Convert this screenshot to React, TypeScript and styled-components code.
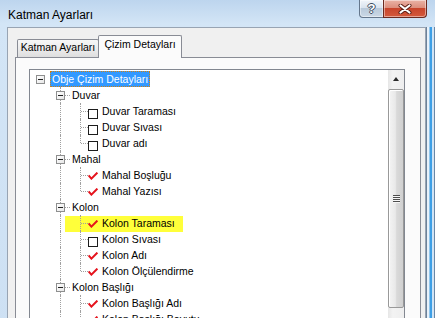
import React from 'react'
import styled, { createGlobalStyle } from 'styled-components'

const GlobalStyle = createGlobalStyle`
  html, body {
    margin: 0;
    padding: 0;
    overflow: hidden;
    background: #d2e4f6;
  }

  body {
    font-family: "Liberation Sans", Arial, sans-serif;
  }
`

const Window = styled.div`
  width: 435px;
  height: 340px;
  display: flex;
  flex-direction: column;
  background: linear-gradient(to bottom, #bdd5ee 0, #d3e5f6 24px, #cde0f3 100%);
`

const TitleBar = styled.div`
  height: 27px;
  display: flex;
  align-items: flex-start;
  padding: 0 8px 0 8px;
  flex-shrink: 0;
`

const Title = styled.div`
  flex: 1;
  padding-top: 9px;
  font-size: 12px;
  line-height: 12px;
  color: #000;
`

const CaptionButtons = styled.div`
  display: flex;
`

const CaptionButton = styled.div<{ $close?: boolean }>`
  box-sizing: border-box;
  width: ${(p) => (p.$close ? 44 : 25)}px;
  height: 18px;
  margin-left: ${(p) => (p.$close ? -1 : 0)}px;
  display: flex;
  align-items: center;
  justify-content: center;
  border: 1px solid ${(p) => (p.$close ? '#6b2a20' : '#64768c')};
  border-top: none;
  border-radius: ${(p) => (p.$close ? '0 0 4px 0' : '0 0 0 4px')};
  background: ${(p) =>
    p.$close
      ? 'linear-gradient(to bottom, #eab3a6 0, #dc8f7e 45%, #c8452c 50%, #d4593c 100%)'
      : 'linear-gradient(to bottom, #f1f5fa 0, #dae4ef 45%, #b9c9da 50%, #cbd8e6 100%)'};
  box-shadow: inset 0 0 0 1px rgba(255, 255, 255, 0.45);
  color: #fff;
  font-weight: bold;
  font-size: 13px;
  line-height: 13px;
  text-shadow:
    1px 0 0 #3c4c60,
    -1px 0 0 #3c4c60,
    0 1px 0 #3c4c60,
    0 -1px 0 #3c4c60;
`

const Frame = styled.div`
  flex: 1;
  display: flex;
  padding-left: 7px;
`

const RightEdge = styled.div`
  width: 9px;
  flex-shrink: 0;
  background: linear-gradient(
    to right,
    #6d8299 0 1px,
    #e8f1fa 1px 3px,
    #8fc6ee 3px 4px,
    #3d9fe6 4px 6px,
    #cfe4f6 6px 8px,
    #6a87a6 8px 9px
  );
`

const Client = styled.div`
  flex: 1;
  display: flex;
  flex-direction: column;
  border: 1px solid #98a4b3;
  border-bottom: none;
  background: #f0f0f0;
  padding: 7px 4px 0 7px;
`

const TabStrip = styled.div`
  display: flex;
  align-items: flex-end;
  padding-left: 2px;
  height: 22px;
  position: relative;
  z-index: 1;
`

const Tab = styled.div<{ $active?: boolean; $width: number }>`
  box-sizing: border-box;
  width: ${(p) => p.$width}px;
  height: ${(p) => (p.$active ? 23 : 18)}px;
  margin-left: ${(p) => (p.$active ? -1 : 0)}px;
  margin-bottom: ${(p) => (p.$active ? -1 : 0)}px;
  padding-top: ${(p) => (p.$active ? 2 : 1)}px;
  border: 1px solid #898c95;
  border-bottom: none;
  border-radius: 2px 2px 0 0;
  background: ${(p) =>
    p.$active ? '#fbfbfb' : 'linear-gradient(to bottom, #f7f7f7 0, #ececec 50%, #dedede 100%)'};
  font-size: 10.5px;
  line-height: 13px;
  text-align: center;
  color: #000;
  white-space: nowrap;
`

const Panel = styled.div`
  flex: 1;
  display: flex;
  flex-direction: column;
  border: 1px solid #898c95;
  border-bottom: none;
  background: #fbfbfb;
  padding: 11px 15px 0 13px;
`

const TreeBox = styled.div`
  flex: 1;
  display: flex;
  border: 1px solid #828790;
  border-bottom: none;
  background: #fff;
  overflow: hidden;
`

const TreeList = styled.div`
  flex: 1;
  padding-top: 1px;
  font-size: 10.5px;
  line-height: 16px;
  color: #000;
`

const Row = styled.div<{ $marked?: boolean }>`
  position: relative;
  z-index: 0;
  display: flex;
  height: 16px;

  &::before {
    content: '';
    display: ${(p) => (p.$marked ? 'block' : 'none')};
    position: absolute;
    z-index: -1;
    left: 35px;
    top: 1px;
    width: 118px;
    height: 16px;
    background: #ffff3a;
  }
`

const Indent = styled.div<{ $line?: boolean }>`
  position: relative;
  width: 20px;
  flex-shrink: 0;

  &::before {
    content: '';
    display: ${(p) => (p.$line ? 'block' : 'none')};
    position: absolute;
    left: 10px;
    top: 0;
    height: 16px;
    border-left: 1px dotted #a0a0a0;
  }
`

const NodeCell = styled.div`
  position: relative;
  width: 20px;
  flex-shrink: 0;
`

const VLine = styled.span<{ $full?: boolean }>`
  position: absolute;
  left: 10px;
  top: 0;
  height: ${(p) => (p.$full ? 16 : 8)}px;
  border-left: 1px dotted #a0a0a0;
`

const HLine = styled.span<{ $leaf?: boolean }>`
  position: absolute;
  left: 11px;
  top: 8px;
  width: ${(p) => (p.$leaf ? 7 : 9)}px;
  border-top: 1px dotted #a0a0a0;
`

const Expander = styled.span`
  position: absolute;
  left: 6px;
  top: 4px;
  box-sizing: border-box;
  width: 9px;
  height: 9px;
  border: 1px solid #8e8f8f;
  background: linear-gradient(to bottom right, #ffffff, #e6e6e6);

  &::after {
    content: '';
    position: absolute;
    left: 1px;
    top: 3px;
    width: 5px;
    height: 1px;
    background: #222;
  }
`

const State = styled.div<{ $on?: boolean }>`
  width: 14px;
  margin-left: -4px;
  flex-shrink: 0;
  box-sizing: border-box;
  padding: ${(p) => (p.$on ? '5px 0 0 2px' : '6px 0 0 2px')};
`

const CheckBox = styled.div`
  box-sizing: border-box;
  width: 10px;
  height: 10px;
  border: 1px solid #1c1c1c;
  background: #fff;
`

const Label = styled.span<{ $selected?: boolean }>`
  display: inline-block;
  height: 16px;
  padding: 0 2px;
  white-space: nowrap;
  box-sizing: border-box;
  background: ${(p) => (p.$selected ? '#3399ff' : 'transparent')};
  color: ${(p) => (p.$selected ? '#fff' : '#000')};
  outline: ${(p) => (p.$selected ? '1px dotted #d4800c' : 'none')};
  outline-offset: -1px;
`

const ScrollBar = styled.div`
  width: 16px;
  flex-shrink: 0;
  display: flex;
  flex-direction: column;
  background: linear-gradient(to right, #e6e6e6 0, #f3f3f3 30%, #eeeeee 100%);
`

const ArrowButton = styled.div`
  height: 17px;
  display: flex;
  align-items: center;
  justify-content: center;
`

const ArrowUp = styled.span`
  width: 0;
  height: 0;
  border-left: 3.5px solid transparent;
  border-right: 3.5px solid transparent;
  border-bottom: 4px solid #2a2a2a;
`

const Thumb = styled.div`
  box-sizing: border-box;
  height: 219px;
  margin-top: 2px;
  border: 1px solid #999;
  border-radius: 2px;
  display: flex;
  align-items: center;
  justify-content: center;
  background: linear-gradient(to right, #f4f4f4 0, #e9e9e9 45%, #d9d9d9 55%, #d0d0d0 100%);
  box-shadow: inset 1px 1px 0 #fff;
`

const Grip = styled.span`
  width: 7px;
  height: 8px;
  background: repeating-linear-gradient(to bottom, #4d4d4d 0 1px, #f6f6f6 1px 2px);
`

type Kind = 'branch' | 'on' | 'off'

type Item = {
  label: string
  level: number
  kind: Kind
  last?: boolean
  selected?: boolean
  marked?: boolean
}

const items: Item[] = [
  { label: 'Obje Çizim Detayları', level: 0, kind: 'branch', selected: true, last: true },
  { label: 'Duvar', level: 1, kind: 'branch' },
  { label: 'Duvar Taraması', level: 2, kind: 'off' },
  { label: 'Duvar Sıvası', level: 2, kind: 'off' },
  { label: 'Duvar adı', level: 2, kind: 'off', last: true },
  { label: 'Mahal', level: 1, kind: 'branch' },
  { label: 'Mahal Boşluğu', level: 2, kind: 'on' },
  { label: 'Mahal Yazısı', level: 2, kind: 'on', last: true },
  { label: 'Kolon', level: 1, kind: 'branch' },
  { label: 'Kolon Taraması', level: 2, kind: 'on', marked: true },
  { label: 'Kolon Sıvası', level: 2, kind: 'off' },
  { label: 'Kolon Adı', level: 2, kind: 'on' },
  { label: 'Kolon Ölçülendirme', level: 2, kind: 'on', last: true },
  { label: 'Kolon Başlığı', level: 1, kind: 'branch' },
  { label: 'Kolon Başlığı Adı', level: 2, kind: 'on' },
  { label: 'Kolon Başlığı Boyutu', level: 2, kind: 'on' },
]

const CheckMark = () => (
  <svg width="10" height="8" viewBox="0 0 10 8" style={{ display: 'block' }}>
    <path d="M0.6 3.4 L3.4 6.6 L9.4 0.6" fill="none" stroke="#e5131d" strokeWidth="2" />
  </svg>
)

const CloseGlyph = () => (
  <svg width="14" height="10" viewBox="0 0 14 10">
    <path d="M2.5 1.5 L11.5 8.5 M11.5 1.5 L2.5 8.5" stroke="#5a1d14" strokeWidth="4" strokeLinecap="round" />
    <path d="M2.5 1.5 L11.5 8.5 M11.5 1.5 L2.5 8.5" stroke="#fff" strokeWidth="2.2" strokeLinecap="round" />
  </svg>
)

const Tree = () => {
  const open: boolean[] = []

  return (
    <TreeList>
      {items.map((item) => {
        const guides = Array.from({ length: item.level }, (_, i) => i > 0 && !!open[i])
        open[item.level] = !item.last
        const leaf = item.kind !== 'branch'

        return (
          <Row key={item.label} $marked={item.marked}>
            {guides.map((line, i) => (
              <Indent key={i} $line={line} />
            ))}
            <NodeCell>
              {item.level > 0 && <VLine $full={!item.last} />}
              {item.level > 0 && <HLine $leaf={leaf} />}
              {!leaf && <Expander />}
            </NodeCell>
            {leaf && (
              <State $on={item.kind === 'on'}>
                {item.kind === 'on' ? <CheckMark /> : <CheckBox />}
              </State>
            )}
            <Label $selected={item.selected}>{item.label}</Label>
          </Row>
        )
      })}
    </TreeList>
  )
}

export default function App() {
  return (
    <>
      <GlobalStyle />
      <Window>
        <TitleBar>
          <Title>Katman Ayarları</Title>
          <CaptionButtons>
            <CaptionButton>?</CaptionButton>
            <CaptionButton $close>
              <CloseGlyph />
            </CaptionButton>
          </CaptionButtons>
        </TitleBar>
        <Frame>
          <Client>
            <TabStrip>
              <Tab $width={82}>Katman Ayarları</Tab>
              <Tab $width={84} $active>
                Çizim Detayları
              </Tab>
            </TabStrip>
            <Panel>
              <TreeBox>
                <Tree />
                <ScrollBar>
                  <ArrowButton>
                    <ArrowUp />
                  </ArrowButton>
                  <Thumb>
                    <Grip />
                  </Thumb>
                </ScrollBar>
              </TreeBox>
            </Panel>
          </Client>
          <RightEdge />
        </Frame>
      </Window>
    </>
  )
}
